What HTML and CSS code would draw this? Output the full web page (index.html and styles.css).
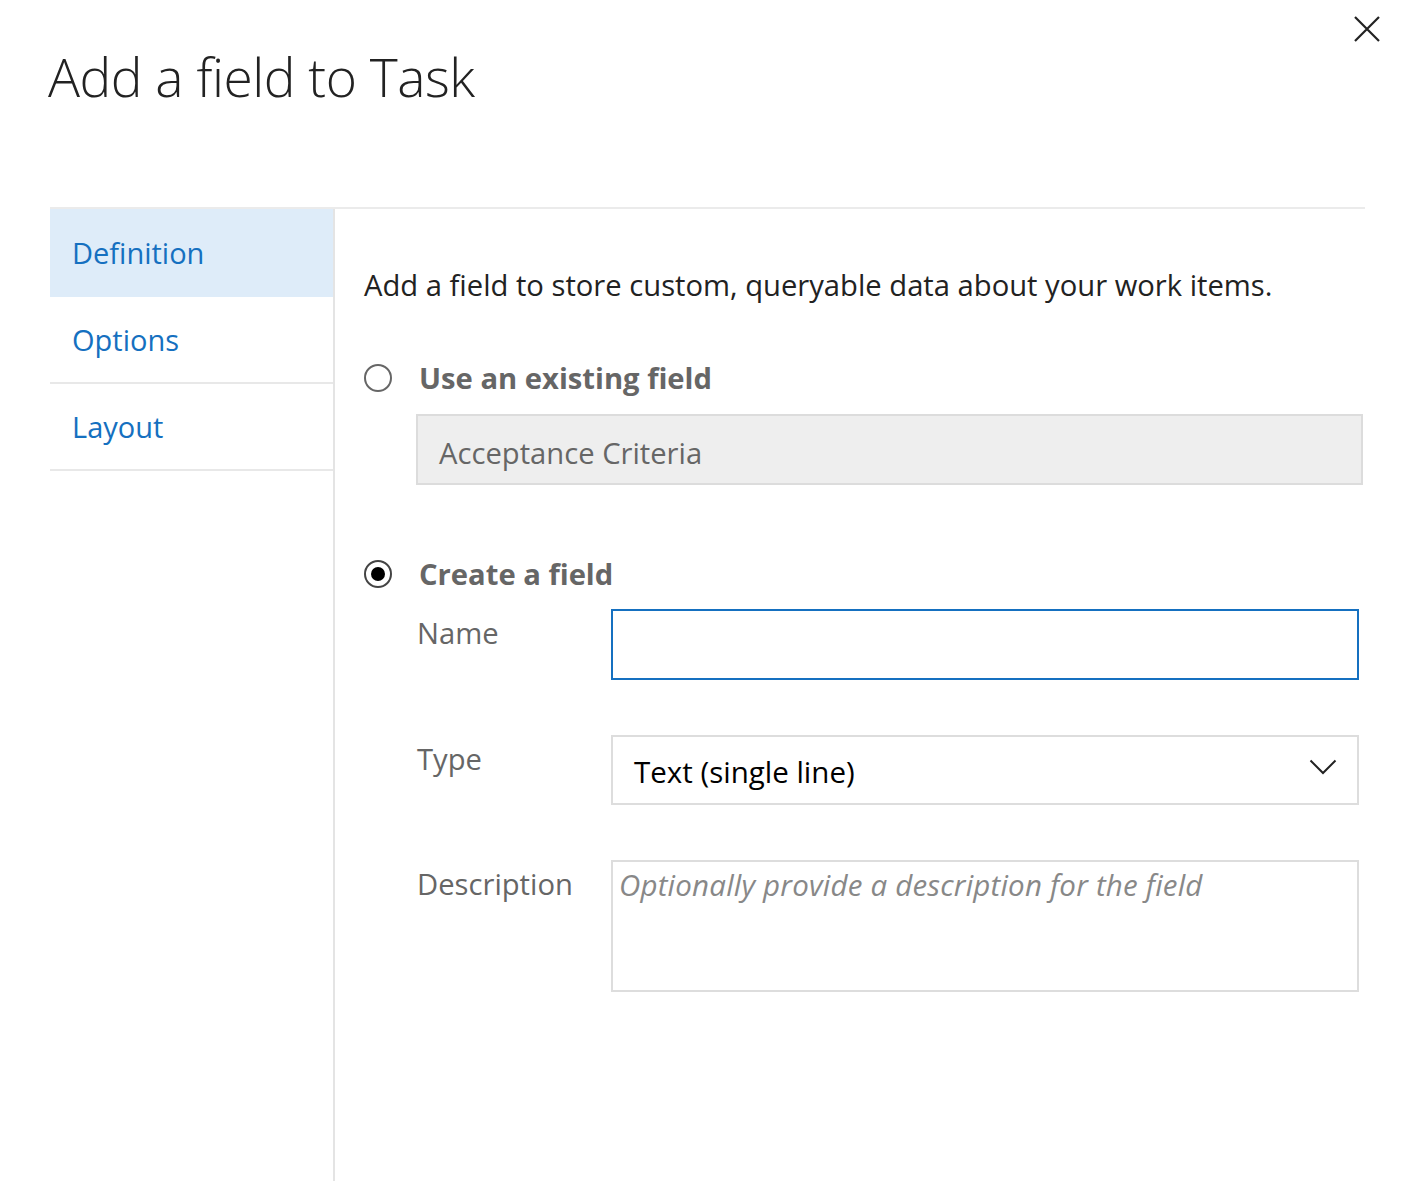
FILE: index.html
```html
<!DOCTYPE html>
<html lang="en">
<head>
<meta charset="utf-8">
<title>Add a field to Task</title>
<link rel="stylesheet" href="styles.css">
</head>
<body>
<div class="dialog">
  <button class="close" aria-label="Close">
    <svg width="28" height="28" viewBox="0 0 28 28"><path d="M2 2 L26 26 M26 2 L2 26" stroke="#222" stroke-width="2.2" fill="none"/></svg>
  </button>
  <h1 class="title">Add a field to Task</h1>
  <div class="panel">
    <nav class="nav">
      <div class="nav-item selected">Definition</div>
      <div class="nav-item">Options</div>
      <div class="nav-item">Layout</div>
    </nav>
    <main class="content">
      <p class="intro">Add a field to store custom, queryable data about your work items.</p>
      <div class="radio-row">
        <span class="radio"></span>
        <span class="radio-label">Use an existing field</span>
      </div>
      <div class="existing">Acceptance Criteria</div>
      <div class="radio-row second">
        <span class="radio checked"></span>
        <span class="radio-label">Create a field</span>
      </div>
      <div class="form-row">
        <span class="label">Name</span>
        <div class="input focused"></div>
      </div>
      <div class="form-row">
        <span class="label">Type</span>
        <div class="input select">
          <span class="select-text">Text (single line)</span>
          <svg class="chev" width="28" height="16" viewBox="0 0 28 16"><path d="M1.5 1.5 L14 14 L26.5 1.5" stroke="#222" stroke-width="2" fill="none"/></svg>
        </div>
      </div>
      <div class="form-row">
        <span class="label">Description</span>
        <div class="input textarea"><span class="placeholder">Optionally provide a description for the field</span></div>
      </div>
    </main>
  </div>
</div>
</body>
</html>
```
FILE: styles.css
```css
html, body {
  margin: 0;
  padding: 0;
  background: #fff;
}
body {
  width: 1411px;
  height: 1181px;
  overflow: hidden;
  font-family: "Open Sans", "Noto Sans", sans-serif;
  color: #222;
}
.dialog {
  position: relative;
  height: 1181px;
  padding: 0 46px 0 50px;
  display: flex;
  flex-direction: column;
}
.close {
  position: absolute;
  top: 15px;
  right: 30px;
  padding: 0;
  border: 0;
  background: none;
  width: 28px;
  height: 28px;
}
.close svg { display: block; }
.title {
  margin: 42px 0 0 -2px;
  font-weight: 300;
  font-size: 53.3px;
  line-height: 70px;
  color: #222;
  letter-spacing: -0.5px;
}
.panel {
  margin-top: 95px;
  flex: 1;
  display: flex;
  border-top: 2px solid #ebebeb;
}
.nav {
  width: 283px;
  flex: none;
  border-right: 2px solid #e4e4e4;
}
.nav-item {
  height: 85px;
  padding-left: 22px;
  display: flex;
  align-items: center;
  font-size: 29px;
  color: #1570c0;
  border-bottom: 2px solid #e8e8e8;
}
.nav-item.selected {
  height: 86px;
  background: #deecf9;
  border-bottom-color: #deecf9;
}
.content {
  flex: 1;
  padding-left: 29px;
  padding-right: 6px;
}
.intro {
  margin: 56px 0 0;
  font-size: 29.2px;
  line-height: 40px;
  color: #222;
}
.radio-row {
  display: flex;
  align-items: center;
  margin-top: 53px;
  height: 40px;
}
.radio-row.second { margin-top: 69px; }
.radio {
  box-sizing: border-box;
  width: 28px;
  height: 28px;
  border: 2px solid #666;
  border-radius: 50%;
  margin-right: 27px;
  display: flex;
  align-items: center;
  justify-content: center;
}
.radio.checked { border-color: #444; }
.radio.checked::after {
  content: "";
  width: 14px;
  height: 14px;
  border-radius: 50%;
  background: #000;
}
.radio-label {
  font-size: 29.2px;
  font-weight: 700;
  color: #666;
}
.existing {
  box-sizing: border-box;
  margin: 16px -4px 0 52px;
  height: 71px;
  background: #eeeeee;
  border: 2px solid #dcdcdc;
  padding: 6px 0 0 21px;
  display: flex;
  align-items: center;
  font-size: 29.2px;
  color: #666;
}
.form-row {
  display: flex;
  margin-left: 53px;
  margin-top: 55px;
}
.radio-row.second + .form-row { margin-top: 15px; }
.label {
  width: 194px;
  flex: none;
  font-size: 29.2px;
  color: #666;
  line-height: 42px;
  margin-top: 3px;
}
.input {
  box-sizing: border-box;
  flex: 1;
  height: 70px;
  border: 2px solid #dddddd;
  background: #fff;
}
.input.focused {
  height: 71px;
  border-color: #1570c0;
}
.select {
  height: 70px;
  display: flex;
  align-items: center;
  padding: 0 20px 0 21px;
  justify-content: space-between;
}
.select-text {
  font-size: 29.5px;
  color: #000;
  margin-top: 2px;
}
.chev { margin-top: -6px; }
.textarea {
  height: 132px;
  padding: 2px 6px;
}
.placeholder {
  font-size: 29.5px;
  font-style: italic;
  color: #888;
  line-height: 42px;
  letter-spacing: 0.2px;
}
```
